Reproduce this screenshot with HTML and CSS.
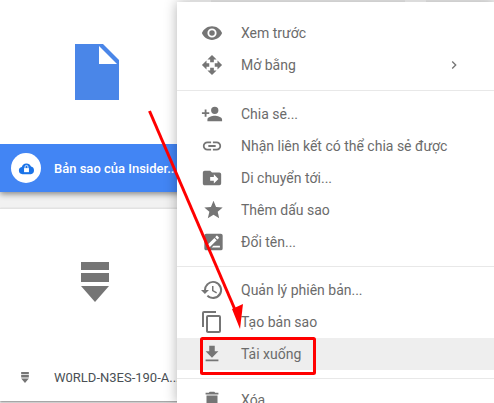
FILE: index.html
```html
<!DOCTYPE html>
<html lang="vi">
<head>
<meta charset="utf-8">
<title>Drive</title>
<link rel="stylesheet" href="styles.css">
</head>
<body>
<div class="page">
  <section class="files">
    <article class="card top">
      <div class="thumb thumb-top">
        <svg class="doc" width="44" height="56" viewBox="0 0 44 56"><path d="M0 0H28L44 16V56H0Z" fill="#4a86e8"/><path d="M24 2V20H42Z" fill="#fff"/></svg>
      </div>
      <div class="bar selected">
        <span class="badge"><svg width="17" height="13" viewBox="0 0 20 16"><path d="M5 15a4.500 4.500 0 0 1-.8-8.900 6 6 0 0 1 11.300-.5A4.800 4.800 0 0 1 15.300 15Z" fill="#1a73e8"/><rect x="7" y="7.500" width="6" height="5" fill="#fff"/><path d="M8.200 7.500V6a1.800 1.800 0 0 1 3.600 0v1.500" fill="none" stroke="#fff"/></svg></span>
        <span class="bar-name">Bản sao của Insider...</span>
      </div>
    </article>
    <article class="card bottom">
      <div class="thumb thumb-bottom">
        <svg width="28" height="40" viewBox="0 0 28 40"><path d="M0 0h28v8H0zM0 11h28v9H0zM0 24h28L14 40Z" fill="#757575"/></svg>
      </div>
      <div class="bar plain">
        <svg class="small" width="8" height="11" viewBox="0 0 28 40"><path d="M0 0h28v8H0zM0 11h28v9H0zM0 24h28L14 40Z" fill="#757575"/></svg>
        <span class="plain-name">W0RLD-N3ES-190-A...</span>
      </div>
    </article>
  </section>

  <nav class="menu">
    <div class="tab tab-left"></div>
    <div class="tab tab-right"></div>
    <ul class="group first">
      <li class="item"><svg class="icon" viewBox="0 0 24 24"><path d="M12 4.500C7 4.500 2.700 7.600 1 12c1.700 4.400 6 7.500 11 7.500s9.300-3.100 11-7.500c-1.700-4.400-6-7.500-11-7.500zM12 17a5 5 0 1 1 0-10 5 5 0 0 1 0 10zm0-8a3 3 0 1 0 0 6 3 3 0 0 0 0-6z"/></svg><span>Xem trước</span></li>
      <li class="item"><svg class="icon" viewBox="0 0 24 24"><path d="M10 9h4V6h3l-5-5-5 5h3zM9 10H6V7l-5 5 5 5v-3h3zM23 12l-5-5v3h-3v4h3v3zM14 15h-4v3H7l5 5 5-5h-3z"/></svg><span>Mở bằng</span><svg class="chevron" viewBox="0 0 24 24"><path d="M8.600 16.600 13.200 12 8.600 7.400 10 6l6 6-6 6z"/></svg></li>
    </ul>
    <ul class="group">
      <li class="item"><svg class="icon" viewBox="0 0 24 24"><path d="M15 12a4 4 0 1 0 0-8 4 4 0 0 0 0 8zM6 10V7H4v3H1v2h3v3h2v-3h3v-2zm9 4c-2.700 0-8 1.300-8 4v2h16v-2c0-2.700-5.300-4-8-4z"/></svg><span>Chia sẻ...</span></li>
      <li class="item"><svg class="icon" viewBox="0 0 24 24"><path d="M3.900 12c0-1.700 1.400-3.100 3.100-3.100h4V7H7a5 5 0 0 0 0 10h4v-1.900H7c-1.700 0-3.100-1.400-3.100-3.100zM8 13h8v-2H8zm9-6h-4v1.900h4c1.700 0 3.100 1.400 3.100 3.100s-1.400 3.100-3.100 3.100h-4V17h4a5 5 0 0 0 0-10z"/></svg><span>Nhận liên kết có thể chia sẻ được</span></li>
      <li class="item"><svg class="icon" viewBox="0 0 24 24"><path d="M20 6h-8l-2-2H4a2 2 0 0 0-2 2v12c0 1.100.9 2 2 2h16a2 2 0 0 0 2-2V8a2 2 0 0 0-2-2zm-6 12v-3h-4v-4h4V8l5 5z"/></svg><span>Di chuyển tới...</span></li>
      <li class="item"><svg class="icon icon-shift" viewBox="0 0 24 24"><path d="M12 17.300 18.200 21l-1.600-7L22 9.200l-7.200-.6L12 2 9.200 8.600 2 9.200 7.500 14l-1.700 7z"/></svg><span>Thêm dấu sao</span></li>
      <li class="item"><svg class="icon icon-shift" viewBox="0 0 24 24"><path d="M20 3H4a2 2 0 0 0-2 2v14c0 1.100.9 2 2 2h16a2 2 0 0 0 2-2V5a2 2 0 0 0-2-2zM5 18v-2.500L13 7.500l2.500 2.500-8 8zm14 0H10l2-2h7zM16.300 9.200l-2.500-2.500 1.400-1.400a.7.7 0 0 1 1 0l1.500 1.500a.7.7 0 0 1 0 1z"/></svg><span>Đổi tên...</span></li>
    </ul>
    <ul class="group">
      <li class="item"><svg class="icon icon-large" viewBox="0 0 24 24"><path d="M13 3a9 9 0 0 0-9 9H1l3.900 3.900L9 12H6a7 7 0 1 1 2.100 4.900l-1.400 1.400A9 9 0 1 0 13 3zm-1 5v5l4.300 2.500.7-1.200-3.500-2.100V8z"/></svg><span>Quản lý phiên bản...</span></li>
      <li class="item"><svg class="icon icon-large" viewBox="0 0 24 24"><path d="M16 1H4a2 2 0 0 0-2 2v14h2V3h12zm3 4H8a2 2 0 0 0-2 2v14c0 1.100.9 2 2 2h11a2 2 0 0 0 2-2V7a2 2 0 0 0-2-2zm0 16H8V7h11z"/></svg><span>Tạo bản sao</span></li>
      <li class="item active"><svg class="icon" viewBox="0 0 24 24"><path d="M19 9h-4V3H9v6H5l7 7zM5 18v2h14v-2z"/></svg><span>Tải xuống</span></li>
    </ul>
    <ul class="group">
      <li class="item item-last"><svg class="icon" viewBox="0 0 24 24"><path d="M6 19c0 1.100.9 2 2 2h8a2 2 0 0 0 2-2V7H6zM19 4h-3.500l-1-1h-5l-1 1H5v2h14z"/></svg><span>Xóa</span></li>
    </ul>
  </nav>

  <svg class="annotation" width="494" height="403" viewBox="0 0 494 403">
    <rect x="201.500" y="338.500" width="113" height="35" fill="none" stroke="#f00" stroke-width="3" rx="1"/>
    <path d="M149.500 111 236 312" stroke="#f00" stroke-width="3" fill="none"/>
    <path d="M240 329 232 309l11-5z" fill="#f00"/>
  </svg>
</div>
</body>
</html>
```

FILE: styles.css
```css
* { box-sizing: border-box; }
html, body { margin: 0; padding: 0; }
body {
  width: 494px;
  height: 403px;
  overflow: hidden;
  background: #f1f1f1;
  font-family: Roboto, "Liberation Sans", sans-serif;
}
.page {
  position: relative;
  display: flex;
  width: 494px;
  height: 403px;
  overflow: hidden;
}
.files {
  width: 194px;
  flex: none;
  display: flex;
  flex-direction: column;
  gap: 16px;
}
.card { background: #fff; }
.top { height: 192px; display: flex; flex-direction: column; }
.bottom {
  height: 193px;
  display: flex;
  flex-direction: column;
  border-top: 1px solid #e2e2e2;
  box-shadow: 0 1px 2px rgba(0, 0, 0, .45);
}
.thumb { display: flex; justify-content: center; }
.thumb-top { height: 144px; padding-top: 44px; }
.thumb-bottom { height: 144px; padding: 53px 4px 0 0; }
.bar { display: flex; align-items: center; white-space: nowrap; overflow: hidden; }
.selected {
  height: 48px;
  background: #4285f4;
  color: #fff;
  padding-left: 11px;
  font-size: 13px;
  font-weight: 500;
  box-shadow: 0 2px 6px rgba(0, 0, 0, .45);
  overflow: visible;
  clip-path: inset(0 0 -16px 0);
}
.badge {
  width: 30px;
  height: 30px;
  border-radius: 50%;
  background: #fff;
  display: flex;
  align-items: center;
  justify-content: center;
  margin-right: 13px;
  flex: none;
}
.plain {
  height: 48px;
  padding-left: 21px;
  font-size: 13px;
  color: #4a4f55;
}
.small { margin-right: 25px; flex: none; }
.menu {
  position: relative;
  z-index: 1;
  flex: none;
  width: 317px;
  margin: 2px 0 0 -17px;
  background: #fff;
  box-shadow: 0 0 12px rgba(0, 0, 0, .3);
  padding-top: 15px;
}
.tab {
  position: absolute;
  top: -2px;
  width: 21px;
  height: 2px;
  background: #dcdcdc;
}
.tab-left { left: 13px; }
.tab-right { left: 228px; }
.group {
  list-style: none;
  margin: 0;
  padding: 7px 0 8px;
  border-top: 1px solid #e8e8e8;
}
.group.first { border-top: 0; padding: 0 0 9px; }
.item {
  display: flex;
  align-items: center;
  height: 32px;
  padding-left: 24px;
  font-size: 14px;
  color: #6b6b6b;
}
.item span { white-space: nowrap; }
.icon {
  width: 22px;
  height: 22px;
  fill: #757575;
  margin-right: 18px;
  flex: none;
}
.icon-shift { transform: translateX(1.5px); }
.icon-large {
  width: 24px;
  height: 24px;
  margin: 0 17px 0 -1px;
}
.item-last { position: relative; top: -2px; }
.chevron {
  width: 16px;
  height: 16px;
  fill: #757575;
  margin-left: auto;
  margin-right: 32px;
}
.active { background: #eee; }
.annotation {
  position: absolute;
  left: 0;
  top: 0;
  z-index: 2;
  pointer-events: none;
}
```
